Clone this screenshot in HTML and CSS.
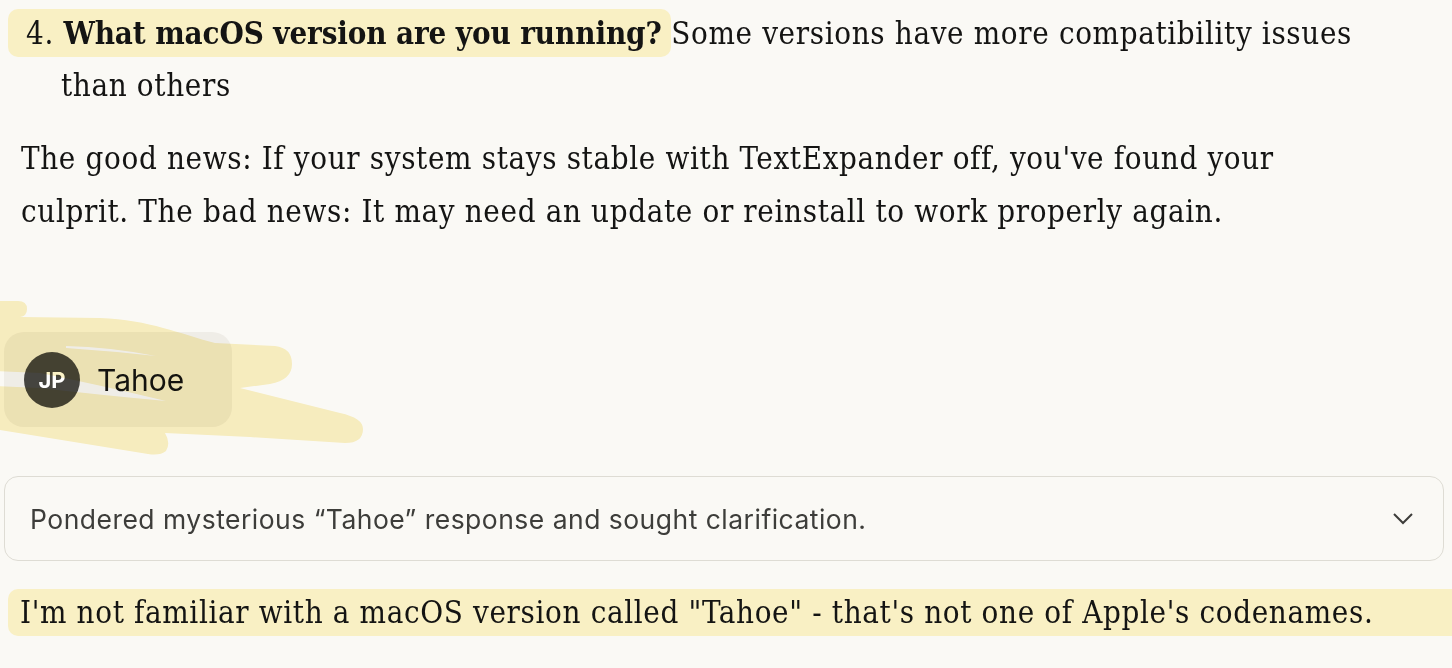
FILE: index.html
```html
<!DOCTYPE html>
<html>
<head>
<meta charset="utf-8">
<link rel="stylesheet" href="styles.css">
</head>
<body>
<main class="page">
  <p class="li"><span class="hl"><span class="num">4.</span> <b>What macOS version are you running?</b> </span>Some versions have more compatibility issues than others</p>
  <p class="para">The good news: If your system stays stable with TextExpander off, you've found your culprit. The bad news: It may need an update or reinstall to work properly again.</p>

  <section class="user-row">
    <div class="bubble">
      <div class="avatar">JP</div>
      <div class="user-text">Tahoe</div>
    </div>
    <svg class="scribble" viewBox="0 290 380 180" width="380" height="180" aria-hidden="true">
      <path fill="#fbf2c6" d="M-5 302 L18 302 Q27 302 27 310 Q27 317 20 318 L100 319 C150 321 180 335 215 344 L275 347 Q292 349 292 365 Q292 381 270 385 L240 389 L340 414 Q363 419 363 430 Q363 444 345 444 L250 438 L165 434 Q171 444 166 452 Q160 457 148 455 L0 431 L-5 431 Z"/>
      <path fill="#ffffff" d="M66 347 Q110 348 156 357 Q110 352 66 349 Z"/>
      <path fill="#ffffff" d="M-5 372 L40 374 Q100 386 166 402 Q100 396 40 389 L-5 387 Z"/>
    </svg>
  </section>

  <div class="thinking">
    <span class="thinking-text">Pondered mysterious “Tahoe” response and sought clarification.</span>
    <svg class="chev" width="22" height="14" viewBox="0 0 22 14" aria-hidden="true"><path d="M2 2 L11 11 L20 2" fill="none" stroke="#3d3d3a" stroke-width="2"/></svg>
  </div>

  <p class="answer"><span class="hl2">I'm not familiar with a macOS version called "Tahoe" - that's not one of Apple's codenames.</span></p>
</main>
</body>
</html>
```
FILE: styles.css
```css
html, body {
  margin: 0;
  padding: 0;
  background: #faf9f5;
}
body {
  width: 1452px;
  height: 668px;
  overflow: hidden;
  color: #141413;
  font-family: "DejaVu Serif", serif;
  font-stretch: condensed;
}
.li {
  margin: 7px 0 0 0;
  padding: 0 72px 0 61px;
  text-indent: -35px;
  font-size: 31px;
  line-height: 52px;
  letter-spacing: 0.65px;
}
.hl {
  background: #f9f0c4;
  border-radius: 10px;
  padding: 6px 0 6px 18px;
  margin-left: -18px;
}
.li b {
  font-weight: 700;
  letter-spacing: -0.1px;
}
.para {
  margin: 21px 0 0 0;
  padding: 0 72px 0 21px;
  font-size: 31px;
  line-height: 53px;
  letter-spacing: 0.65px;
}
.user-row {
  position: relative;
  margin-top: 94px;
  height: 95px;
}
.bubble {
  display: flex;
  align-items: center;
  gap: 17px;
  box-sizing: border-box;
  margin-left: 4px;
  height: 95px;
  width: 228px;
  padding-left: 20px;
  border-radius: 20px;
  background: #efede7;
}
.avatar {
  flex: none;
  width: 56px;
  height: 56px;
  border-radius: 50%;
  background: #45443f;
  color: #fff;
  font-family: "Inter", "Liberation Sans", sans-serif;
  font-stretch: normal;
  font-weight: 700;
  font-size: 22px;
  display: flex;
  align-items: center;
  justify-content: center;
}
.user-text {
  font-family: "Inter", "Liberation Sans", sans-serif;
  font-stretch: normal;
  font-size: 30px;
  color: #141413;
}
.scribble {
  position: absolute;
  left: 0;
  top: -43px;
  mix-blend-mode: multiply;
  pointer-events: none;
}
.thinking {
  margin: 49px 8px 0 4px;
  height: 85px;
  box-sizing: border-box;
  border: 1px solid #dedcd4;
  border-radius: 14px;
  display: flex;
  align-items: center;
  justify-content: space-between;
  padding: 0 29px 0 25px;
}
.thinking-text {
  font-family: "Inter", "Liberation Sans", sans-serif;
  font-stretch: normal;
  font-size: 26.5px;
  letter-spacing: 0.48px;
  color: #3d3d3a;
}
.chev {
  display: block;
}
.answer {
  margin: 28px 0 0 0;
  padding-left: 8px;
  font-size: 31px;
  line-height: 47px;
  letter-spacing: 0.65px;
}
.hl2 {
  display: block;
  background: #f9f0c4;
  border-radius: 10px 0 0 10px;
  padding-left: 12px;
}
```
